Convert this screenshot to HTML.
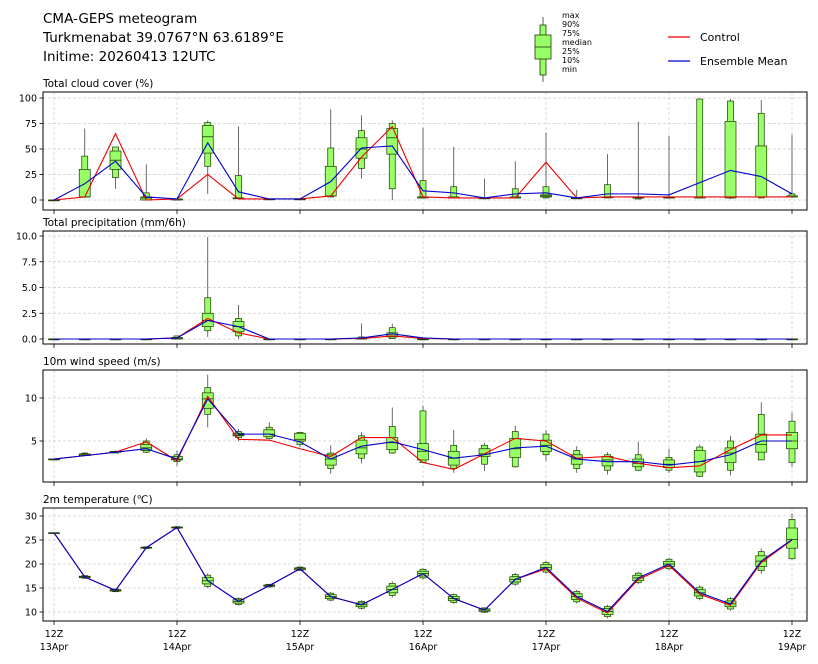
<!DOCTYPE html>
<html><head><meta charset="utf-8"><style>
html,body{margin:0;padding:0;background:#fff;}
svg{display:block;font-family:"DejaVu Sans","Liberation Sans",sans-serif;}
</style></head><body>
<svg id="s" width="818" height="664" xmlns="http://www.w3.org/2000/svg">
<text x="43" y="23" font-size="13.5">CMA-GEPS meteogram</text>
<text x="43" y="42" font-size="13.5">Turkmenabat 39.0767°N 63.6189°E</text>
<text x="43" y="61" font-size="13.5">Initime: 20260413 12UTC</text>
<line x1="543" y1="17" x2="543" y2="82" stroke="#333" stroke-width="0.8"/>
<rect x="540" y="25" width="6" height="50" fill="#99ff66" stroke="#1a3a00" stroke-width="0.8"/>
<rect x="535" y="35" width="16" height="24" fill="#99ff66" stroke="#1a3a00" stroke-width="0.8"/>
<line x1="535" y1="47" x2="551" y2="47" stroke="#1a3a00" stroke-width="0.8"/>
<g font-size="8">
<text x="562" y="18">max</text><text x="562" y="27">90%</text><text x="562" y="36">75%</text><text x="562" y="45">median</text><text x="562" y="54">25%</text><text x="562" y="63">10%</text><text x="562" y="72">min</text>
</g>
<line x1="668" y1="37" x2="690" y2="37" stroke="#e00" stroke-width="1.2"/>
<text x="700" y="41" font-size="11">Control</text>
<line x1="668" y1="61" x2="690" y2="61" stroke="#00c" stroke-width="1.2"/>
<text x="700" y="65" font-size="11">Ensemble Mean</text>
<g id="g"></g>
</svg>
<script>
var NS="http://www.w3.org/2000/svg",G=document.getElementById("g"),h="";
var X0=54,DX=30.75,L=43,R=807;
function X(i){return X0+DX*i;}
var P=[
{t:"Total cloud cover (%)",top:92,bot:210,y:function(v){return 200-1.02*v},ticks:[[0,"0"],[25,"25"],[50,"50"],[75,"75"],[100,"100"]],ty:83,
d:[[0,0,0,0,0,0,0,0,0],[2,3,3,3,30,43,70,3,16],[11,22,30,39,48,52,52,65,38],[0,0,0,2,3,7,35,0,3],[0,0,0,1,1,1,1,1,1],[6,33,46,62,73,76,78,25,56],[2,2,2,2,2,24,72,1,8],[1,1,1,1,1,1,1,1,1],[1,1,1,1,1,1,1,1,1],[3,3,4,4,33,51,89,4,18],[21,31,41,50,61,68,83,42,51],[0,11,45,61,70,75,78,72,53],[2,2,2,3,3,19,71,3,9],[2,2,2,2,3,13,52,2,7],[2,2,2,2,2,2,21,2,2],[2,2,2,2,3,11,38,2,6],[2,2,3,4,5,13,66,37,7],[1,2,2,2,2,2,10,2,2],[2,2,3,3,3,15,45,3,6],[1,1,2,2,3,3,77,3,6],[2,2,2,2,3,3,63,3,5],[2,2,2,3,3,99,99,3,17],[1,2,2,3,77,97,99,3,29],[2,2,3,3,53,85,98,3,23],[3,3,3,3,4,6,64,3,6]]},
{t:"Total precipitation (mm/6h)",top:231,bot:344,y:function(v){return 339-10.3*v},ticks:[[0,"0.0"],[2.5,"2.5"],[5,"5.0"],[7.5,"7.5"],[10,"10.0"]],ty:222,
d:[]},
{t:"10m wind speed (m/s)",top:370,bot:482,y:function(v){return 484-8.6*v},ticks:[[5,"5"],[10,"10"]],ty:361,
d:[[2.9,2.9,2.9,2.9,2.9,2.9,2.9,2.9,2.9],[3.2,3.3,3.3,3.4,3.5,3.6,3.7,3.3,3.3],[3.6,3.6,3.7,3.7,3.8,3.8,3.9,3.7,3.7],[3.6,3.7,3.9,4.2,4.6,5.0,5.3,4.9,4.1],[2.1,2.6,2.8,2.9,3.2,3.4,3.9,2.7,2.9],[6.6,8.1,8.8,9.9,10.6,11.2,12.7,10.2,9.9],[5.0,5.4,5.6,5.7,5.9,6.1,6.4,5.2,5.8],[5.2,5.3,5.5,5.8,6.3,6.6,7.2,5.1,5.8],[4.3,4.6,5.0,5.2,5.9,6.0,6.0,4.1,4.9],[1.2,1.8,2.2,2.9,3.4,3.6,4.5,3.2,2.9],[2.4,3.0,3.5,4.2,5.1,5.6,6.0,5.4,4.4],[3.5,3.6,4.0,4.8,5.4,6.7,8.9,5.4,4.9],[2.4,2.5,2.8,3.8,4.7,8.5,9.1,2.5,4.0],[1.3,1.8,2.2,3.0,3.8,4.5,6.3,1.7,3.0],[1.5,2.3,3.2,3.5,4.1,4.5,4.8,3.5,3.4],[1.9,2.0,3.1,4.1,5.3,6.1,6.8,5.3,4.2],[2.7,3.4,3.8,4.5,5.1,5.8,6.3,5.0,4.4],[1.3,1.8,2.3,2.9,3.4,3.9,4.4,3.0,2.9],[1.1,1.6,2.1,2.8,3.2,3.4,3.7,3.2,2.6],[1.5,1.6,2.0,2.4,2.9,3.4,4.9,2.4,2.6],[1.3,1.6,1.9,2.3,2.8,3.1,4.1,1.9,2.2],[0.8,0.9,1.4,2.6,3.9,4.3,4.6,2.1,2.6],[1.0,1.6,2.5,3.6,4.2,5.0,5.6,4.0,3.4],[2.8,2.8,3.7,4.6,5.8,8.1,9.5,5.7,5.0],[2.0,2.5,4.1,5.0,6.0,7.3,8.3,5.7,5.0]]},
{t:"2m temperature (℃)",top:508,bot:621,y:function(v){return 660-4.8*v},ticks:[[10,"10"],[15,"15"],[20,"20"],[25,"25"],[30,"30"]],ty:499,d:[]}
];
// precip
var pr=[];for(var i=0;i<25;i++)pr.push([0,0,0,0,0,0,0,0,0]);
pr[4]=[0,0,0,0.05,0.15,0.3,0.3,0.1,0.1];pr[5]=[0.2,0.8,1.2,1.8,2.5,4.0,9.9,2.0,1.8];pr[6]=[0,0.3,0.7,1.2,1.7,2.0,3.3,0.6,1.2];
pr[10]=[0,0,0,0,0.1,0.2,1.5,0.05,0.1];pr[11]=[0,0.05,0.2,0.3,0.6,1.1,1.5,0.3,0.5];pr[12]=[0,0,0,0,0,0,0.1,0.05,0.1];
P[1].d=pr;
// temp
var tm=[[26.5,0],[17.3,.3],[14.5,.3],[23.4,.2],[27.6,.2],[16.5,1.3],[12.2,.7],[15.5,.3],[19.0,.4],[13.2,.8],[11.5,.8],[14.7,1.4],[18.0,1.0],[12.8,.9],[10.4,.5],[16.8,1.1],[19.3,1.1],[13.2,1.2],[10.1,1.2],[17.1,1.1],[20.0,1.1],[14.0,1.3],[11.7,1.2],[20.6,2.2]];
var td=[];tm.forEach(function(a,i){var m=a[0],s=a[1];td.push([m-s*1.2,m-s*.9,m-s*.5,m,m+s*.5,m+s*.9,m+s*1.2,m-(i>15?0.3:0),m]);});
td.push([20.8,21.1,23.3,25.1,27.5,29.3,30.5,25,25.1]);
td[0]=[26.5,26.5,26.5,26.5,26.5,26.5,26.5,26.5,26.5];
P[3].d=td;
var days=["13Apr","14Apr","15Apr","16Apr","17Apr","18Apr","19Apr"];
P.forEach(function(p,pi){
 h+='<text x="43" y="'+(p.ty+4)+'" font-size="10.5">'+p.t+'</text>';
 // grid
 for(var k=0;k<7;k++){var x=X0+123*k;h+='<line x1="'+x+'" y1="'+p.top+'" x2="'+x+'" y2="'+p.bot+'" stroke="#ccc" stroke-width="0.7" stroke-dasharray="3,2"/>';
  h+='<line x1="'+x+'" y1="'+p.bot+'" x2="'+x+'" y2="'+(p.bot+4)+'" stroke="#000" stroke-width="0.8"/>';}
 p.ticks.forEach(function(t){var y=p.y(t[0]);h+='<line x1="'+L+'" y1="'+y+'" x2="'+R+'" y2="'+y+'" stroke="#ccc" stroke-width="0.7" stroke-dasharray="3,2"/>';
  h+='<line x1="'+(L-3.5)+'" y1="'+y+'" x2="'+L+'" y2="'+y+'" stroke="#000" stroke-width="0.8"/>';
  h+='<text x="'+(L-6)+'" y="'+(y+3.5)+'" font-size="9.5" text-anchor="end">'+t[1]+'</text>';});
 // boxes
 p.d.forEach(function(d,i){var x=X(i),y=p.y;
  h+='<line x1="'+x+'" y1="'+y(d[0])+'" x2="'+x+'" y2="'+y(d[6])+'" stroke="#444" stroke-width="0.8"/>';
  var a=y(d[5]),b=y(d[1]);h+='<rect x="'+(x-3)+'" y="'+a+'" width="6" height="'+Math.max(b-a,0.8)+'" fill="#99ff66" stroke="#1a3a00" stroke-width="0.7"/>';
  a=y(d[4]);b=y(d[2]);h+='<rect x="'+(x-5.5)+'" y="'+a+'" width="11" height="'+Math.max(b-a,0.8)+'" fill="#99ff66" stroke="#1a3a00" stroke-width="0.7"/>';
  h+='<line x1="'+(x-5.5)+'" y1="'+y(d[3])+'" x2="'+(x+5.5)+'" y2="'+y(d[3])+'" stroke="#1a3a00" stroke-width="0.8"/>';});
 var c="",m="";p.d.forEach(function(d,i){c+=X(i)+","+p.y(d[7])+" ";m+=X(i)+","+p.y(d[8])+" ";});
 h+='<polyline points="'+c+'" fill="none" stroke="#e00" stroke-width="1.1"/>';
 h+='<polyline points="'+m+'" fill="none" stroke="#00c" stroke-width="1.1"/>';
 h+='<rect x="'+L+'" y="'+p.top+'" width="'+(R-L)+'" height="'+(p.bot-p.top)+'" fill="none" stroke="#000" stroke-width="1"/>';
});
for(var k=0;k<7;k++){var x=X0+123*k;h+='<text x="'+x+'" y="637" font-size="9.5" text-anchor="middle">12Z</text><text x="'+x+'" y="650" font-size="9.5" text-anchor="middle">'+days[k]+'</text>';}
G.innerHTML=h;
</script>
</body></html>
